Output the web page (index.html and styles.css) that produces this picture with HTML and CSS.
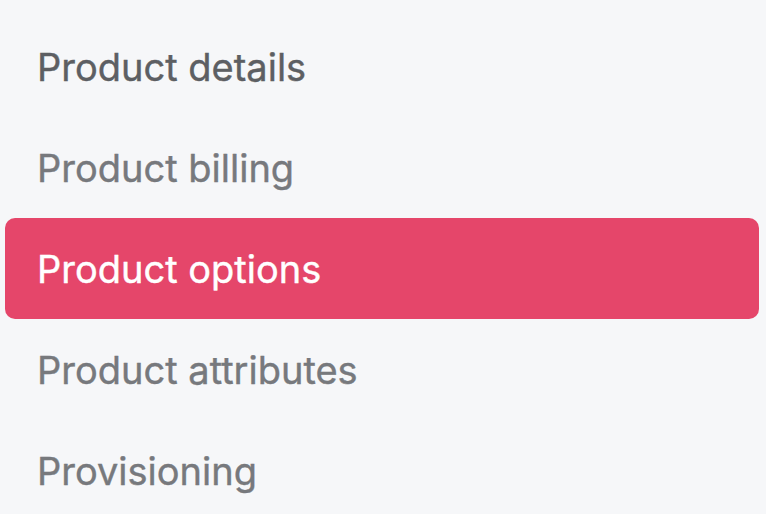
FILE: index.html
```html
<!DOCTYPE html>
<html>
<head>
  <link rel="stylesheet" href="styles.css">
</head>
<body>
  <nav class="side-menu">
    <a class="menu-item first" href="#">Product details</a>
    <a class="menu-item" href="#">Product billing</a>
    <a class="menu-item active" href="#">Product options</a>
    <a class="menu-item" href="#">Product attributes</a>
    <a class="menu-item" href="#">Provisioning</a>
  </nav>
</body>
</html>
```
FILE: styles.css
```css
body {
  margin: 0;
  background-color: #f6f7f9;
  font-family: Inter, "Noto Sans", sans-serif;
}

.side-menu {
  display: flex;
  flex-direction: column;
  padding: 16px 7px 0 5px;
}

.menu-item {
  display: flex;
  align-items: center;
  height: 101px;
  padding-left: 32px;
  font-size: 38px;
  color: #77797d;
  text-decoration: none;
  border-radius: 10px;
  -webkit-text-stroke: 0.4px currentColor;
}

.menu-item.first {
  color: #5d5f63;
}

.menu-item.active {
  background-color: #e5466a;
  color: white;
}
```
